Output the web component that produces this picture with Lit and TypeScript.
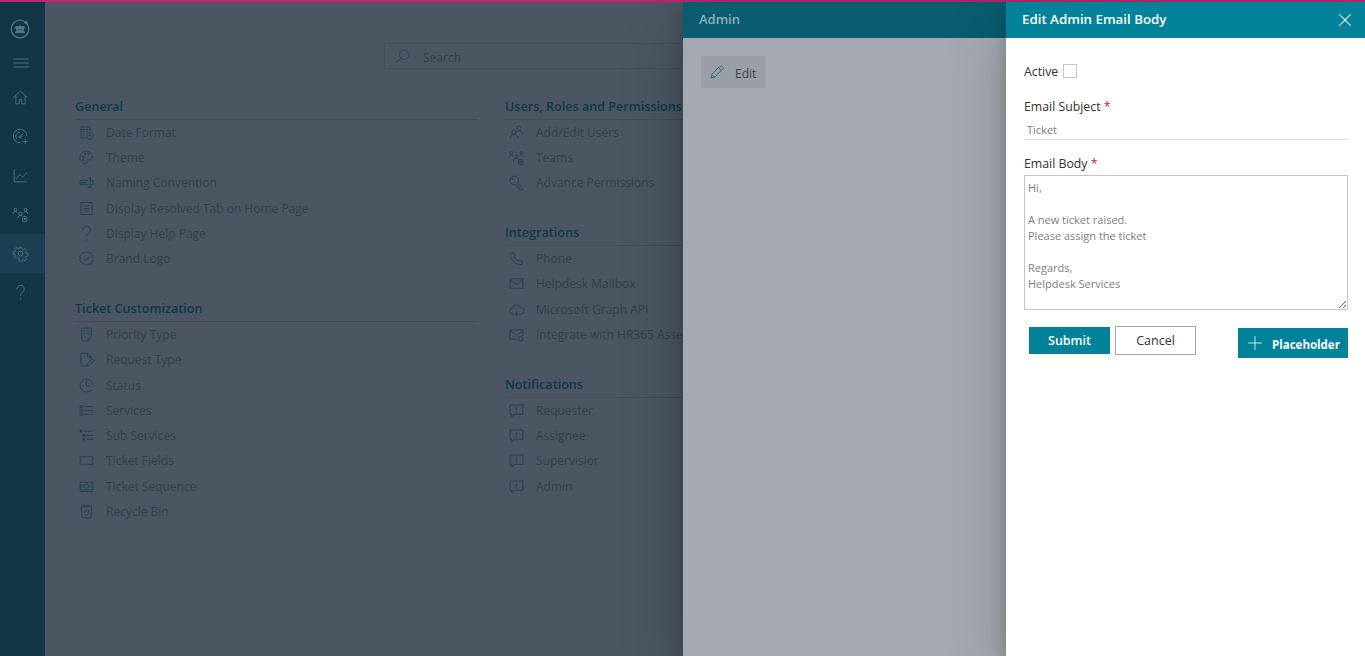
import { LitElement, html, css, svg } from "lit";
import { customElement } from "lit/decorators.js";

const icons: Record<string, unknown> = {
  calendar: svg`<path d="M14.5 8V3.5h-11v13h5.5M3.5 6.5h11M6 2.5v2M12 2.5v2M5.5 9h2M5.5 11.5h2M5.5 14h2M9.5 9h2"/><circle cx="14" cy="14" r="4"/><path d="M14 11.8V14h1.8"/>`,
  palette: svg`<path d="M10 2.5c-4.4 0-7.7 3.3-7.7 7.5s3.3 7.5 7 7.5c1.5 0 1.7-1.3 1-2.3-.8-1.3 0-2.5 1.5-2.5h2.2c1.9 0 3.2-1.3 3.2-3.2 0-3.9-3.2-7-7.2-7z"/><circle cx="6" cy="9" r="1"/><circle cx="8.5" cy="6" r="1"/><circle cx="12.5" cy="6" r="1"/><circle cx="6.5" cy="13" r="1"/>`,
  naming: svg`<path d="M12 7.5H2.5v5H12M15.5 7.5h2v5h-2M12.5 4.5h2v11h-2M11 4.5h5M11 15.5h5"/><rect x="4" y="9.2" width="6" height="1.6" fill="currentColor" stroke="none"/>`,
  form: svg`<rect x="3.5" y="3" width="13" height="14"/><path d="M6.5 7h7M6.5 10h7M6.5 13h7"/>`,
  question: svg`<path d="M5.5 6.5C5.8 3.8 7.700 1.500 10 1.500c2.500 0 4.500 1.700 4.500 4.500 0 3.800-4.500 3.700-4.500 8"/><path d="M10 17v1.500"/>`,
  badge: svg`<path d="M10 2l2.300 1.500 2.700-.2.900 2.600 2.200 1.600-.9 2.500.9 2.500-2.200 1.600-.9 2.600-2.700-.2L10 18l-2.300-1.500-2.700.2-.9-2.600-2.200-1.600.9-2.500-.9-2.500 2.200-1.600.9-2.600 2.700.2z"/><path d="M6.800 10.200l2.200 2.200 4.200-4.400"/>`,
  priority: svg`<path d="M15.500 12V2.500h-11v15h7.500l3.500-3.500M12 17.500V14h3.500M7 6h1.500M10 6h3.500M7 9h1.500M10 9h3.500M7 12h1.500"/>`,
  request: svg`<path d="M11 17.500H3.500v-15h7.500l4.500 4.500v2.500M11 2.500V7h4.500"/><path d="M10.500 17.500l.7-2.700 5.600-5.600 2 2-5.600 5.600z"/>`,
  clock: svg`<path d="M17.500 10a7.500 7.500 0 1 0-3 6"/><path d="M10 5.500V10.500h3.500M14 16.500l3-1"/>`,
  services: svg`<path d="M6.500 5.500h11M6.500 10h11M6.500 14.500h11"/><rect x="2.500" y="4.500" width="2.500" height="2"/><rect x="2.500" y="9" width="2.500" height="2"/><rect x="2.500" y="13.500" width="2.500" height="2"/>`,
  subservices: svg`<path d="M6 5h11.500M10 10h7.500M10 14.500h7.500"/><rect x="2.500" y="4" width="2" height="2" fill="currentColor"/><rect x="6" y="9" width="2" height="2" fill="currentColor"/><rect x="6" y="13.500" width="2" height="2" fill="currentColor"/>`,
  ticket: svg`<path d="M2.500 5.500h15v3a1.500 1.500 0 0 0 0 3v3h-15v-3a1.500 1.500 0 0 0 0-3z"/>`,
  sequence: svg`<rect x="2.500" y="5" width="15" height="9"/><ellipse cx="10" cy="9.500" rx="3" ry="2.500"/><path d="M2.500 16h15M5 8v3M15 8v3"/>`,
  recycle: svg`<path d="M3.500 4.500h13l-1.500 13H5zM3.500 4.500c1.500-2.500 11.500-2.500 13 0"/><path d="M7.500 11a2.700 2.700 0 0 1 4.700-1.200l.6.800M13 8.500v2.200h-2.200M12.500 12.500a2.700 2.700 0 0 1-4.700.7"/>`,
  users: svg`<circle cx="7" cy="9.500" r="2.500"/><path d="M2.500 17c0-3 2-4.500 4.500-4.500s4.500 1.500 4.500 4.500"/><circle cx="13" cy="5" r="2.500"/><path d="M12 9.500c.5-1 .9-1.300 1-1.300 2.500 0 4.500 1.700 4.500 4.800"/>`,
  team: svg`<circle cx="4" cy="4.500" r="1.700"/><circle cx="16" cy="4.500" r="1.700"/><circle cx="10" cy="9" r="1.900"/><path d="M1.500 9.500c0-2 1-2.800 2.500-2.800 1 0 1.800.4 2.200 1.300M18.500 9.500c0-2-1-2.800-2.500-2.800-1 0-1.800.4-2.200 1.300M6.500 14.500c0-2 1.500-3.300 3.500-3.300 1 0 1.800.3 2.300.8"/><rect x="12.500" y="12.500" width="5" height="6" rx="1"/><circle cx="15" cy="15" r="1" fill="currentColor"/>`,
  key: svg`<circle cx="7.500" cy="7.500" r="5"/><path d="M11 11l6.500 6v1.500h-3l-.5-1.500h-1.500v-1.500H11V14l-2-1.500"/><circle cx="5.500" cy="5.500" r=".7"/>`,
  phone: svg`<path d="M5.500 2.500L3 4.500c-.8 3 1 6.500 3.500 9s6 4.300 9.500 3.500l1.500-2.500-3.500-2.700-2 1.200c-2-1-4-3-5-5l1.500-2z"/>`,
  mail: svg`<rect x="2.500" y="4.500" width="15" height="11"/><path d="M2.500 5.500L10 11l7.500-5.500"/>`,
  cloud: svg`<path d="M7.500 15.500H5.500a3.500 3.500 0 0 1-.5-7 5 5 0 0 1 9.500-1 4 4 0 0 1 .5 8h-2.500M10 11.500v6M7.500 15.500h5"/>`,
  mailcog: svg`<path d="M11 15.500H2.500v-11h15v7"/><path d="M2.500 5.500L10 11l7.500-5.500"/><circle cx="15" cy="15" r="2.500"/>`,
  comment: svg`<path d="M2.500 3.500h15v11H7L4.500 17.500v-3h-2z"/><path d="M10 6v4M10 11.500v1"/>`,
  logo: svg`<circle cx="10" cy="10" r="8.800" stroke-width="1.200"/><circle cx="7" cy="9" r="1.400" fill="currentColor"/><circle cx="13" cy="9" r="1.400" fill="currentColor"/><circle cx="10" cy="8.500" r="1.600" fill="currentColor"/><path d="M5.500 13.500c.5-2 2-2.600 4.500-2.600s4 .6 4.500 2.600z" fill="currentColor"/><circle cx="16" cy="3.500" r="1.800" fill="#4f7a5c" stroke="none"/>`,
  menu: svg`<path d="M1.500 5.600h17M1.500 10h17M1.500 14.400h17"/>`,
  home: svg`<path d="M1.800 10L10 2.500 18.200 10M4.500 8v9.500h4v-5h3v5h4V8"/>`,
  gauge: svg`<path d="M9.500 17.500a8 8 0 1 1 8-8"/><path d="M9.500 5a5 5 0 0 0-4 8M9.500 11l4-5"/><circle cx="9.500" cy="10.500" r="1.300"/><path d="M15.500 13v6M12.500 16h6"/>`,
  chart: svg`<path d="M2.500 2.500v15h15.500M4.500 14l4.500-5 3.500 3 5.500-6"/>`,
  gear: svg`<circle cx="10" cy="10" r="2.800"/><path d="M8.500 2h3l.5 2.400 1.600.7 2.100-1.300 2.100 2.100-1.300 2.100.7 1.600 2.300.5v3l-2.300.5-.7 1.600 1.300 2.100-2.100 2.100-2.100-1.300-1.600.7-.5 2.300h-3L8 15.800l-1.600-.7-2.100 1.300-2.100-2.100 1.300-2.100-.7-1.600L.5 11.500v-3l2.300-.5.700-1.600-1.300-2.100 2.100-2.100 2.100 1.300L8 4.400z" transform="translate(.8 .8) scale(.92)"/>`,
  search: svg`<circle cx="12" cy="8" r="5.500"/><path d="M8 12l-6 6"/>`,
  pencil: svg`<path d="M2.500 17.500l1-4.500L13.500 3c.8-.8 2-.8 2.800 0l.7.700c.8.800.8 2 0 2.800L7 16.500zM3.500 13L7 16.500M12 4.500L15.500 8"/>`,
  plus: svg`<path d="M10 1.500v17M1.500 10h17"/>`,
  close: svg`<path d="M3 3l14 14M17 3L3 17"/>`,
};

const ic = (name: string) =>
  html`<svg class="ic" viewBox="0 0 20 20" aria-hidden="true">${icons[name]}</svg>`;

type Sec = { title: string; items: [string, string][] };

const col1: Sec[] = [
  {
    title: "General",
    items: [
      ["calendar", "Date Format"],
      ["palette", "Theme"],
      ["naming", "Naming Convention"],
      ["form", "Display Resolved Tab on Home Page"],
      ["question", "Display Help Page"],
      ["badge", "Brand Logo"],
    ],
  },
  {
    title: "Ticket Customization",
    items: [
      ["priority", "Priority Type"],
      ["request", "Request Type"],
      ["clock", "Status"],
      ["services", "Services"],
      ["subservices", "Sub Services"],
      ["ticket", "Ticket Fields"],
      ["sequence", "Ticket Sequence"],
      ["recycle", "Recycle Bin"],
    ],
  },
];
const col2: Sec[] = [
  {
    title: "Users, Roles and Permissions",
    items: [
      ["users", "Add/Edit Users"],
      ["team", "Teams"],
      ["key", "Advance Permissions"],
    ],
  },
  {
    title: "Integrations",
    items: [
      ["phone", "Phone"],
      ["mail", "Helpdesk Mailbox"],
      ["cloud", "Microsoft Graph API"],
      ["mailcog", "Integrate with HR365 Asset Management"],
    ],
  },
  {
    title: "Notifications",
    items: [
      ["comment", "Requester"],
      ["comment", "Assignee"],
      ["comment", "Supervisior"],
      ["comment", "Admin"],
    ],
  },
];

const body = `Hi,

A new ticket raised.
Please assign the ticket

Regards,
Helpdesk Services`;

@customElement("app-root")
export class AppRoot extends LitElement {
  static styles = css`
    :host {
      display: block;
      position: relative;
      width: 1365px;
      height: 656px;
      overflow: hidden;
      background: #4b5662;
      font-family: "Open Sans", "Noto Sans", sans-serif;
      font-size: 12px;
      color: #363e49;
    }
    .topline {
      height: 2px;
      background: #c2256f;
    }
    .shell {
      display: flex;
      height: 654px;
    }
    .ic {
      display: block;
      fill: none;
      stroke: currentColor;
      stroke-width: 1;
    }
    .side {
      width: 45px;
      flex: none;
      background: #123648;
      color: #587684;
      display: flex;
      flex-direction: column;
      padding-top: 9px;
    }
    .side > div {
      padding-right: 4px;
      display: flex;
      align-items: center;
      justify-content: center;
    }
    .side .logo {
      height: 36px;
      padding-right: 6px;
    }
    .side .logo .ic {
      width: 20px;
      height: 20px;
    }
    .side .ham {
      height: 31px;
    }
    .side .ham .ic {
      width: 18px;
      height: 18px;
    }
    .side .nav {
      height: 39px;
    }
    .side .nav .ic {
      width: 17px;
      height: 17px;
    }
    .side .nav.on {
      background: #1c3f53;
    }
    .main {
      flex: 1;
      min-width: 0;
      padding: 41px 0 0 30px;
      overflow: hidden;
    }
    .search {
      margin-left: 309px;
      width: 640px;
      border: 1px solid #42505e;
      display: flex;
      align-items: center;
      gap: 12px;
      padding: 0 0 0 9px;
      box-sizing: content-box;
      height: 24px;
      color: #363e49;
    }
    .search span {
      padding-top: 2px;
    }
    .search .ic {
      width: 17px;
      height: 17px;
      color: #254659;
    }
    .cols {
      display: grid;
      grid-template-columns: 403px 403px;
      column-gap: 27px;
      margin-top: 25px;
    }
    .sec {
      margin-bottom: 25px;
    }
    .sec h3 {
      margin: 0;
      height: 25.5px;
      line-height: 26px;
      box-sizing: border-box;
      border-bottom: 1px solid #404c5a;
      font-size: 12.6px;
      font-weight: 600;
      color: #113850;
      white-space: nowrap;
    }
    .row {
      height: 25.3px;
      display: flex;
      align-items: center;
      white-space: nowrap;
    }
    .row .ico {
      width: 22px;
      flex: none;
      display: flex;
      justify-content: center;
      color: #1e4054;
      margin-right: 9px;
    }
    .row .ic {
      width: 17px;
      height: 17px;
    }
    .row span {
      color: #363e49;
    }
    .panel {
      position: absolute;
      top: 2px;
      bottom: 0;
      box-shadow: 0 25.6px 57.6px rgba(0, 0, 0, 0.22),
        0 4.8px 14.4px rgba(0, 0, 0, 0.18);
    }
    .admin {
      left: 683px;
      width: 323px;
      background: #a5a9b1;
    }
    .admin header {
      height: 36px;
      background: #0a5c70;
      color: #8fb0ba;
      font-size: 13px;
      font-weight: 600;
      display: flex;
      align-items: center;
      padding: 0 0 2px 16px;
      box-sizing: border-box;
    }
    .admin .tools {
      padding: 18px;
    }
    .editbtn {
      width: 64px;
      height: 32px;
      background: #9a9ea6;
      display: flex;
      align-items: center;
      gap: 10px;
      padding: 0 0 0 8px;
      box-sizing: border-box;
      color: #3a3f47;
    }
    .editbtn span {
      padding-top: 2px;
    }
    .editbtn .ic {
      width: 16px;
      height: 16px;
      color: #1f6a7c;
      stroke-width: 1.2;
    }
    .edit {
      left: 1006px;
      width: 359px;
      background: #fff;
      color: #333;
    }
    .edit header {
      height: 36px;
      background: #00829b;
      color: #fff;
      font-size: 13.3px;
      font-weight: 600;
      display: flex;
      align-items: center;
      justify-content: space-between;
      padding: 0 12px 2px 16px;
      box-sizing: border-box;
    }
    .edit header .ic {
      width: 16px;
      height: 16px;
      stroke-width: 1.3;
      margin-top: 2px;
    }
    .form {
      padding: 24px 17px 0 18px;
      display: flex;
      flex-direction: column;
      font-size: 12.3px;
    }
    .active {
      display: flex;
      align-items: center;
      gap: 5px;
      height: 18px;
    }
    .check {
      width: 14px;
      height: 14px;
      box-sizing: border-box;
      border: 1px solid #c4c4c4;
      background: #fff;
    }
    label {
      display: block;
    }
    .lab {
      height: 18px;
      line-height: 18px;
      margin-top: 18px;
    }
    .req {
      color: #c4262e;
    }
    .inp {
      height: 19px;
      margin-top: 4px;
      border-bottom: 1px solid #e1e1e1;
      color: #808080;
      padding-left: 3px;
      line-height: 19px;
      font-size: 11px;
      box-sizing: content-box;
    }
    .lab2 {
      margin-top: 15px;
    }
    textarea {
      display: block;
      margin-top: 2px;
      width: 324px;
      height: 135px;
      box-sizing: border-box;
      border: 1px solid #c4c4c4;
      padding: 4px 3px 3px;
      outline: none;
      font-family: inherit;
      font-size: 11px;
      line-height: 16px;
      color: #808080;
      border-radius: 0;
    }
    .btns {
      display: flex;
      align-items: flex-start;
      margin-top: 16px;
      padding-left: 5px;
      font-size: 12.5px;
    }
    .btn {
      box-sizing: border-box;
      display: flex;
      align-items: center;
      justify-content: center;
      font-weight: 600;
    }
    .submit {
      width: 81px;
      height: 27px;
      margin-top: 1px;
      background: #00829b;
      color: #fff;
    }
    .cancel {
      width: 81px;
      height: 29px;
      margin-left: 5px;
      border: 1px solid #a6a6a6;
      background: #fff;
      color: #333;
      font-weight: 400;
    }
    .ph {
      width: 110px;
      height: 30px;
      margin-left: auto;
      margin-top: 2px;
      background: #00829b;
      color: #fff;
      gap: 9px;
      font-weight: 700;
      font-size: 11.5px;
      justify-content: flex-start;
      padding-left: 9px;
    }
    .ph span {
      padding-top: 2px;
    }
    .ph .ic {
      width: 16px;
      height: 16px;
    }
  `;

  private sec(s: Sec) {
    return html`<section class="sec">
      <h3>${s.title}</h3>
      ${s.items.map(
        ([i, t]) => html`<div class="row"><div class="ico">${ic(i)}</div><span>${t}</span></div>`
      )}
    </section>`;
  }

  render() {
    return html`
      <div class="topline"></div>
      <div class="shell">
        <aside class="side">
          <div class="logo">${ic("logo")}</div>
          <div class="ham">${ic("menu")}</div>
          <div class="nav">${ic("home")}</div>
          <div class="nav">${ic("gauge")}</div>
          <div class="nav">${ic("chart")}</div>
          <div class="nav">${ic("team")}</div>
          <div class="nav on">${ic("gear")}</div>
          <div class="nav">${ic("question")}</div>
        </aside>
        <main class="main">
          <div class="search">${ic("search")}<span>Search</span></div>
          <div class="cols">
            <div>${col1.map((s) => this.sec(s))}</div>
            <div>${col2.map((s) => this.sec(s))}</div>
          </div>
        </main>
      </div>
      <div class="panel admin">
        <header>Admin</header>
        <div class="tools">
          <div class="editbtn">${ic("pencil")}<span>Edit</span></div>
        </div>
      </div>
      <div class="panel edit">
        <header><span>Edit Admin Email Body</span>${ic("close")}</header>
        <div class="form">
          <div class="active"><span>Active</span><div class="check"></div></div>
          <label class="lab">Email Subject <span class="req">*</span></label>
          <div class="inp">Ticket</div>
          <label class="lab lab2">Email Body <span class="req">*</span></label>
          <textarea .value=${body}></textarea>
          <div class="btns">
            <div class="btn submit">Submit</div>
            <div class="btn cancel">Cancel</div>
            <div class="btn ph">${ic("plus")}<span>Placeholder</span></div>
          </div>
        </div>
      </div>
    `;
  }
}
